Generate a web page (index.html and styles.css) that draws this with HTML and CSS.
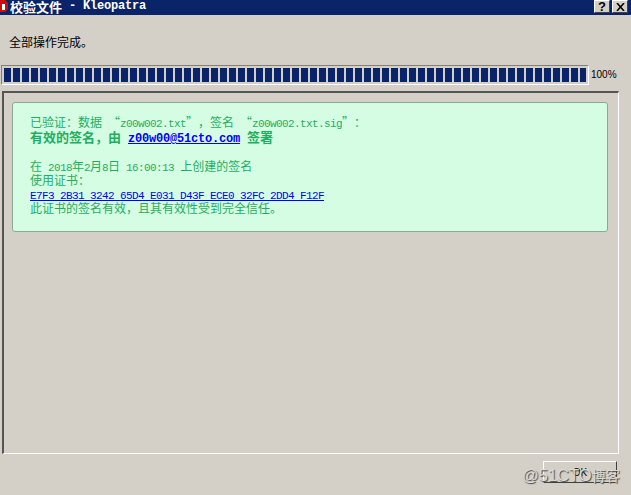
FILE: index.html
```html
<!DOCTYPE html>
<html lang="zh-CN">
<head>
<meta charset="utf-8">
<title>校验文件 - Kleopatra</title>
<link rel="stylesheet" href="styles.css">
</head>
<body>
<div class="window">
  <header class="titlebar">
    <svg class="app-icon" width="8" height="13" viewBox="0 0 8 13"><path d="M0 0h5l3 3v6l-3 3H0z" fill="#c81010"/><path d="M2 4h3v6H2z" fill="#fff"/></svg>
    <span class="title-cjk">校验文件</span>
    <span class="title-lat">- Kleopatra</span>
    <span class="title-buttons">
      <span class="cap-btn">?</span>
      <span class="cap-btn"><svg width="9" height="8" viewBox="0 0 9 8"><path d="M1 0l7 8M8 0L1 8" stroke="#000" stroke-width="1.6" fill="none"/></svg></span>
    </span>
  </header>
  <div class="status">全部操作完成。</div>
  <div class="progress-row">
    <div class="progress"><div class="progress-fill"></div></div>
    <span class="percent">100%</span>
  </div>
  <main class="panel">
    <section class="result">
      <div class="line tall">已验证：数据<span class="gap"></span>“<span class="lat">z00w002.txt</span>”，签名<span class="gap"></span>“<span class="lat">z00w002.txt.sig</span>”：</div>
      <div class="line tall strong">有效的签名，由<span class="gap-b"></span><a class="lat-b" href="#">z00w00@51cto.com</a><span class="gap-b"></span>签署</div>
      <div class="line tall">&nbsp;</div>
      <div class="line">在<span class="gap"></span><span class="lat">2018</span>年<span class="lat">2</span>月<span class="lat">8</span>日<span class="gap"></span><span class="lat">16:00:13</span><span class="gap"></span>上创建的签名</div>
      <div class="line">使用证书：</div>
      <div class="line"><a class="lat" href="#">E7F3 2B31 3242 65D4 E031 D43F ECE0 32FC 2DD4 F12F</a></div>
      <div class="line">此证书的签名有效，且其有效性受到完全信任。</div>
    </section>
  </main>
  <footer class="footer">
    <button class="ok" type="button">OK</button>
    <span class="watermark">@51CTO<span class="watermark-cjk">博客</span></span>
  </footer>
</div>
</body>
</html>
```
FILE: styles.css
```css
* { box-sizing: border-box; }
html, body { margin: 0; padding: 0; }
body { background: #d4d0c8; font-family: "Noto Sans CJK SC", "Liberation Sans", sans-serif; font-size: 12px; color: #000; text-spacing-trim: space-all; }
.window { width: 631px; height: 495px; display: flex; flex-direction: column; overflow: hidden; background: #d4d0c8; }
.titlebar { height: 15px; flex: none; background: #0a246a; color: #fff; display: flex; align-items: flex-start; padding-right: 3px; }
.app-icon { flex: none; margin-right: 2px; }
.title-cjk { font-size: 13px; font-weight: 700; line-height: 13px; }
.title-lat { font-family: "Liberation Mono", monospace; font-size: 12px; letter-spacing: -0.2px; font-weight: 700; line-height: 13px; margin-left: 7px; white-space: pre; }
.title-buttons { margin-left: auto; display: flex; gap: 2px; }
.cap-btn { width: 16px; height: 13px; background: #d4d0c8; border: 1px solid; border-color: #fff #404040 #404040 #fff; color: #000; font: 700 13px/11px "Liberation Sans", sans-serif; display: flex; align-items: center; justify-content: center; }
.status { margin: 18px 0 0 9px; height: 17px; line-height: 17px; font-size: 12px; color: #000; }
.progress-row { display: flex; align-items: center; margin: 15px 0 0 1px; height: 20px; }
.progress { width: 588px; height: 20px; padding: 2px; border: 1px solid; border-color: #808080 #fff #fff #808080; }
.progress-fill { width: 100%; height: 100%; background: repeating-linear-gradient(to right, #0a246a 0 7px, transparent 7px 9px); }
.percent { margin-left: 2px; font: 10px/20px "Liberation Sans", sans-serif; color: #000; }
.panel { margin: 6px 0 0 2px; width: 617px; height: 363px; flex: none; padding: 9px 0 0 8px; border: 2px solid; border-color: #555 #fff #fff #555; border-right-width: 1px; border-bottom-width: 1px; }
.result { width: 596px; height: 130px; padding: 11px 0 0 17px; background: #d4fde4; border: 1px solid #8aa898; border-radius: 3px; color: #1fae5f; }
.line { height: 14px; line-height: 14px; white-space: nowrap; font-size: 12px; }
.tall { height: 15px; line-height: 15px; }
.lat { font-family: "Liberation Mono", monospace; font-size: 11px; letter-spacing: -0.6px; white-space: pre; }
.lat-b { font-family: "Liberation Mono", monospace; font-size: 12px; letter-spacing: -0.2px; font-weight: 700; }
.gap { display: inline-block; width: 6px; }
.gap-b { display: inline-block; width: 7px; }
.strong { font-weight: 700; font-size: 13px; }
a { color: #0000ff; text-decoration: underline; }
.footer { flex: 1; position: relative; display: flex; justify-content: flex-end; align-items: flex-start; padding: 7px 14px 0 0; }
.ok { width: 74px; height: 22px; padding: 0; background: #d4d0c8; border: 1px solid; border-color: #fff #404040 #404040 #fff; font: 10px "Liberation Sans", sans-serif; color: #000; }
.watermark { position: absolute; left: 522px; top: 11px; font: 16.5px/20px "Liberation Sans", "Noto Sans CJK SC", sans-serif; color: #dcdad4; text-shadow: 1px 1px 1px #444; white-space: nowrap; }
.watermark-cjk { font-size: 14px; }
```
